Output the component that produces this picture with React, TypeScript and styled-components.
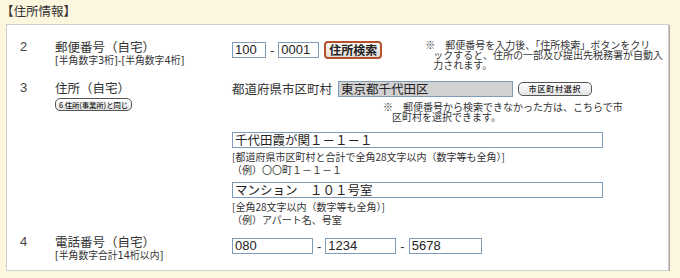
import styled, { createGlobalStyle } from 'styled-components';

const GlobalStyle = createGlobalStyle`
  body {
    margin: 0;
    background: #fdf6df;
    color: #333;
    font-family: "Liberation Sans", "Noto Sans CJK JP", sans-serif;
  }
`;

const Page = styled.div`
  padding-top: 3px;
`;

const Title = styled.div`
  font-family: "Noto Sans CJK JP", sans-serif;
  font-size: 12.5px;
  line-height: 16px;
  height: 21px;
  padding-left: 1px;
`;

const Panel = styled.div`
  margin: 0 11px 0 6px;
  background: #fff;
  border: 1px solid #cfcfcf;
  box-shadow: 1px 1px 0 #a9a9a9;
  padding: 13px 0 9px 13px;
  display: flex;
  flex-direction: column;
`;

const Row = styled.div<{ $gap?: number }>`
  display: grid;
  grid-template-columns: 35px 177px 1fr;
  align-items: start;
  margin-top: ${p => p.$gap ?? 0}px;
`;

const Num = styled.div`
  font-size: 13px;
  line-height: 17px;
  color: #444;
`;

const LabelBox = styled.div`
  font-family: "Noto Sans CJK JP", sans-serif;
  display: flex;
  flex-direction: column;
  align-items: flex-start;
`;

const Label = styled.div`
  font-size: 12.5px;
  line-height: 17px;
`;

const Sub = styled.div`
  font-family: "DejaVu Sans", "Noto Sans CJK JP", sans-serif;
  font-size: 9.8px;
  line-height: 11px;
`;

const Content = styled.div`
  display: flex;
  flex-direction: column;
  align-items: flex-start;
`;

const Line = styled.div<{ $top?: boolean }>`
  display: flex;
  align-items: ${p => (p.$top ? 'flex-start' : 'center')};
`;

const Field = styled.div<{ $w: number; $readonly?: boolean; $jp?: boolean }>`
  box-sizing: border-box;
  width: ${p => p.$w}px;
  height: 16px;
  border: 1px solid #7f9db9;
  background: ${p => (p.$readonly ? '#d2d2d2' : '#fff')};
  font-family: ${p => (p.$jp ? '"Noto Sans CJK JP", sans-serif' : '"Liberation Sans", sans-serif')};
  font-size: ${p => (p.$jp ? 12.5 : 13)}px;
  line-height: 14px;
  padding: 0 2px;
  color: #222;
  white-space: nowrap;
`;

const Dash = styled.span`
  font-size: 13px;
  margin: 0 4px;
`;

const SearchButton = styled.div`
  box-sizing: border-box;
  margin-left: 5px;
  height: 18px;
  padding: 0 3px;
  border: 2px solid #b4532d;
  border-radius: 4px;
  background: linear-gradient(#fbf8f4, #e6ded6);
  font-family: "Noto Sans CJK JP", sans-serif;
  font-weight: bold;
  font-size: 12px;
  line-height: 14px;
  color: #222;
`;

const PillButton = styled.div<{ $w: number; $spaced?: boolean }>`
  box-sizing: border-box;
  width: ${p => p.$w}px;
  height: 13px;
  border: 1px solid #555;
  border-radius: 5px;
  background: linear-gradient(#ffffff, #e4e4e4);
  font-family: "Noto Sans CJK JP", sans-serif;
  font-size: ${p => (p.$spaced ? 8 : 7.4)}px;
  font-weight: 500;
  letter-spacing: ${p => (p.$spaced ? '0.8px' : '-0.1px')};
  line-height: 11px;
  text-align: center;
  color: #222;
  white-space: nowrap;
  overflow: hidden;
`;

const Note = styled.div<{ $indent: number }>`
  font-family: "Noto Sans CJK JP", sans-serif;
  font-size: 10px;
  line-height: 10px;
  padding-left: ${p => p.$indent}px;
  text-indent: -${p => p.$indent}px;
  white-space: nowrap;
`;

const Help = styled.div`
  font-family: "Noto Sans CJK JP", sans-serif;
  font-size: 10px;
  line-height: 13px;
  margin-top: 2px;
`;

const PlainText = styled.span`
  font-family: "Noto Sans CJK JP", sans-serif;
  font-size: 12.5px;
  margin-right: 6px;
`;

export default function App() {
  return (
    <Page>
      <GlobalStyle />
      <Title>【住所情報】</Title>
      <Panel>
        <Row>
          <Num>2</Num>
          <LabelBox>
            <Label>郵便番号（自宅）</Label>
            <Sub>[半角数字3桁]-[半角数字4桁]</Sub>
          </LabelBox>
          <Line $top>
            <Line style={{ marginTop: 3 }}>
              <Field $w={34}>100</Field>
              <Dash>-</Dash>
              <Field $w={41}>0001</Field>
              <SearchButton>住所検索</SearchButton>
            </Line>
            <Note $indent={8} style={{ marginLeft: 43, marginTop: 2 }}>
              ※　郵便番号を入力後、「住所検索」ボタンをクリ
              <br />
              ックすると、住所の一部及び提出先税務署が自動入
              <br />
              力されます。
            </Note>
          </Line>
        </Row>
        <Row $gap={9}>
          <Num>3</Num>
          <LabelBox>
            <Label>住所（自宅）</Label>
            <PillButton $w={77} style={{ marginTop: 2 }}>6 住所(事業所)と同じ</PillButton>
          </LabelBox>
          <Content>
            <Line>
              <PlainText>都道府県市区町村</PlainText>
              <Field $w={175} $readonly $jp>東京都千代田区</Field>
              <PillButton $w={74} $spaced style={{ marginLeft: 5, height: 14 }}>市区町村選択</PillButton>
            </Line>
            <Note $indent={9} style={{ marginLeft: 151, marginTop: 4 }}>
              ※　郵便番号から検索できなかった方は、こちらで市
              <br />
              区町村を選択できます。
            </Note>
            <Field $w={371} $jp style={{ marginTop: 10 }}>千代田霞が関１－１－１</Field>
            <Help>
              [都道府県市区町村と合計で全角28文字以内（数字等も全角）]
              <br />
              （例）〇〇町１－１－１
            </Help>
            <Field $w={371} $jp style={{ marginTop: 6 }}>マンション　１０１号室</Field>
            <Help>
              [全角28文字以内（数字等も全角）]
              <br />
              （例）アパート名、号室
            </Help>
          </Content>
        </Row>
        <Row $gap={7}>
          <Num>4</Num>
          <LabelBox>
            <Label>電話番号（自宅）</Label>
            <Sub>[半角数字合計14桁以内]</Sub>
          </LabelBox>
          <Line style={{ marginTop: 5 }}>
            <Field $w={81}>080</Field>
            <Dash>-</Dash>
            <Field $w={71}>1234</Field>
            <Dash>-</Dash>
            <Field $w={73}>5678</Field>
          </Line>
        </Row>
      </Panel>
    </Page>
  );
}
